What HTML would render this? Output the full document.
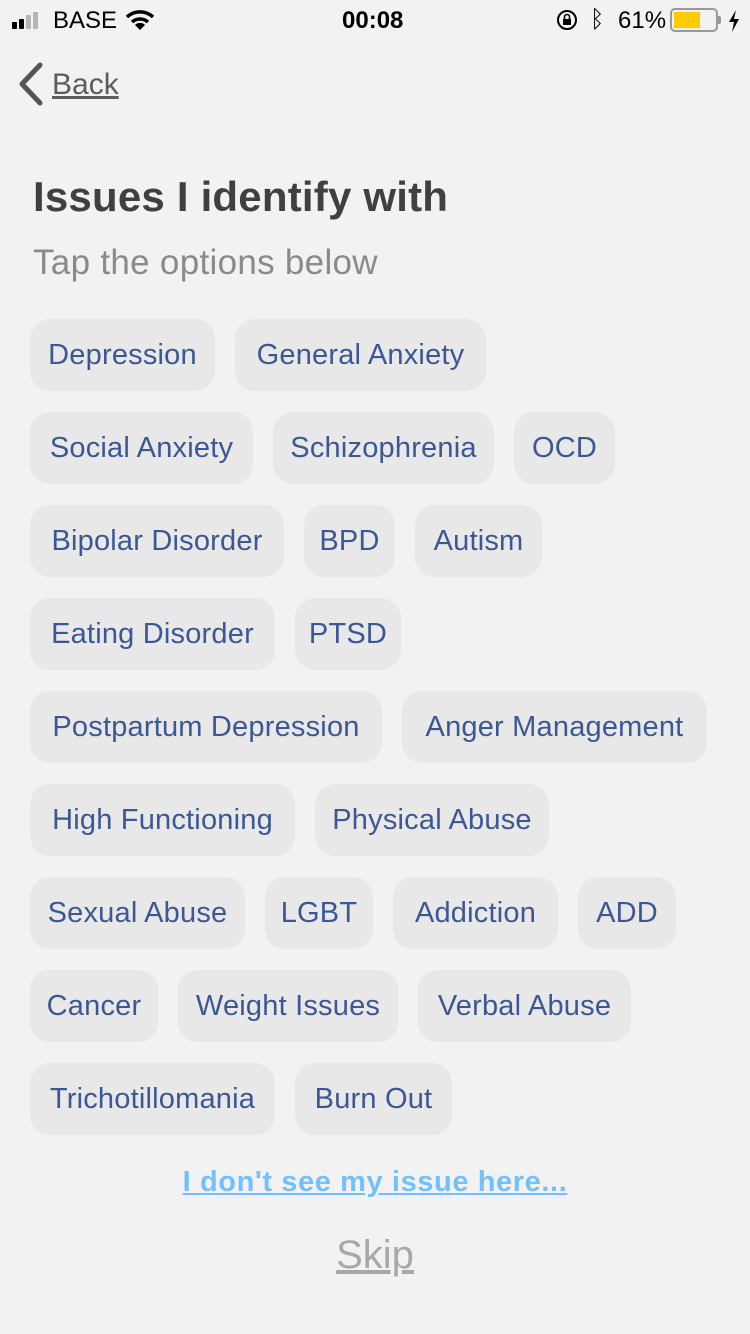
<!DOCTYPE html>
<html><head><meta charset="utf-8">
<style>
*{margin:0;padding:0;box-sizing:border-box}
body{width:750px;height:1334px;background:#f2f2f2;font-family:"Liberation Sans",sans-serif;position:relative;overflow:hidden}
.sb{position:absolute;top:0;left:0;width:750px;height:40px;font-size:24px;color:#000}
.chip{position:absolute;height:72px;background:#e8e8e8;border-radius:20px;color:#3b5895;font-size:29px;line-height:72px;text-align:center;white-space:nowrap;letter-spacing:0.2px}
h1{position:absolute;left:33px;top:173px;font-size:42px;font-weight:bold;color:#404040;letter-spacing:0.2px}
.sub{position:absolute;left:33px;top:243px;font-size:35px;color:#8a8a8a;letter-spacing:0.3px}
</style></head><body>
<div class="sb">
  <svg style="position:absolute;left:12px;top:12px" width="36" height="17"><rect x="0" y="10" width="5" height="7" fill="#000" rx="1"/><rect x="7" y="7" width="5" height="10" fill="#000" rx="1"/><rect x="14" y="3" width="5" height="14" fill="#b5b5b5" rx="1"/><rect x="21" y="0" width="5" height="17" fill="#b5b5b5" rx="1"/></svg>
  <span style="position:absolute;left:53px;top:7px">BASE</span>
  <svg style="position:absolute;left:125px;top:9px" width="30" height="22" viewBox="0 0 30 22"><path d="M2 8 A19 19 0 0 1 28 8" stroke="#000" stroke-width="3.5" fill="none"/><path d="M7 13 A12 12 0 0 1 23 13" stroke="#000" stroke-width="3.5" fill="none"/><path d="M15 21 L10 16 A7 7 0 0 1 20 16 Z" fill="#000"/></svg>
  <span style="position:absolute;left:342px;top:7px;font-weight:bold">00:08</span>
  <svg style="position:absolute;left:556px;top:9px" width="22" height="22"><circle cx="11" cy="11" r="9" stroke="#000" stroke-width="2" fill="none"/><rect x="7" y="10" width="8" height="6" fill="#000"/><path d="M8.5 10 V8 a2.5 2.5 0 0 1 5 0 V10" stroke="#000" stroke-width="1.6" fill="none"/></svg>
  <span style="position:absolute;left:590px;top:6px;font-size:24px">ᛒ</span>
  <span style="position:absolute;left:618px;top:7px">61%</span>
  <div style="position:absolute;left:670px;top:8px;width:48px;height:24px;border:2px solid #999;border-radius:5px"><div style="position:absolute;left:2px;top:2px;width:26px;height:16px;background:#fecb00"></div></div>
  <div style="position:absolute;left:718px;top:16px;width:3px;height:8px;background:#999;border-radius:0 2px 2px 0"></div>
  <svg style="position:absolute;left:728px;top:10px" width="12" height="22"><path d="M8 0 L1 12 H6 L4 22 L11 9 H6 Z" fill="#000"/></svg>
</div>
<svg style="position:absolute;left:16px;top:62px" width="28" height="44"><path d="M24 3 L6 22 L24 41" stroke="#555" stroke-width="5" fill="none" stroke-linecap="round" stroke-linejoin="round"/></svg>
<span style="position:absolute;left:52px;top:68px;font-size:30px;color:#5c5c5c;text-decoration:underline">Back</span>
<h1>Issues I identify with</h1>
<div class="sub">Tap the options below</div>

<div class="chip" style="left:30px;top:319px;width:185px">Depression</div>
<div class="chip" style="left:235px;top:319px;width:251px">General Anxiety</div>
<div class="chip" style="left:30px;top:412px;width:223px">Social Anxiety</div>
<div class="chip" style="left:273px;top:412px;width:221px">Schizophrenia</div>
<div class="chip" style="left:514px;top:412px;width:101px">OCD</div>
<div class="chip" style="left:30px;top:505px;width:254px">Bipolar Disorder</div>
<div class="chip" style="left:304px;top:505px;width:91px">BPD</div>
<div class="chip" style="left:415px;top:505px;width:127px">Autism</div>
<div class="chip" style="left:30px;top:598px;width:245px">Eating Disorder</div>
<div class="chip" style="left:295px;top:598px;width:106px">PTSD</div>
<div class="chip" style="left:30px;top:691px;width:352px">Postpartum Depression</div>
<div class="chip" style="left:402px;top:691px;width:305px">Anger Management</div>
<div class="chip" style="left:30px;top:784px;width:265px">High Functioning</div>
<div class="chip" style="left:315px;top:784px;width:234px">Physical Abuse</div>
<div class="chip" style="left:30px;top:877px;width:215px">Sexual Abuse</div>
<div class="chip" style="left:265px;top:877px;width:108px">LGBT</div>
<div class="chip" style="left:393px;top:877px;width:165px">Addiction</div>
<div class="chip" style="left:578px;top:877px;width:98px">ADD</div>
<div class="chip" style="left:30px;top:970px;width:128px">Cancer</div>
<div class="chip" style="left:178px;top:970px;width:220px">Weight Issues</div>
<div class="chip" style="left:418px;top:970px;width:213px">Verbal Abuse</div>
<div class="chip" style="left:30px;top:1063px;width:245px">Trichotillomania</div>
<div class="chip" style="left:295px;top:1063px;width:157px">Burn Out</div>

<div style="position:absolute;left:0;width:750px;top:1166px;text-align:center;font-size:29px;color:#72c0fc;text-decoration:underline;letter-spacing:0.6px;font-weight:bold">I don't see my issue here...</div>
<div style="position:absolute;left:0;width:750px;top:1233px;text-align:center;font-size:40px;color:#a8a8a8;text-decoration:underline">Skip</div>
</body></html>
